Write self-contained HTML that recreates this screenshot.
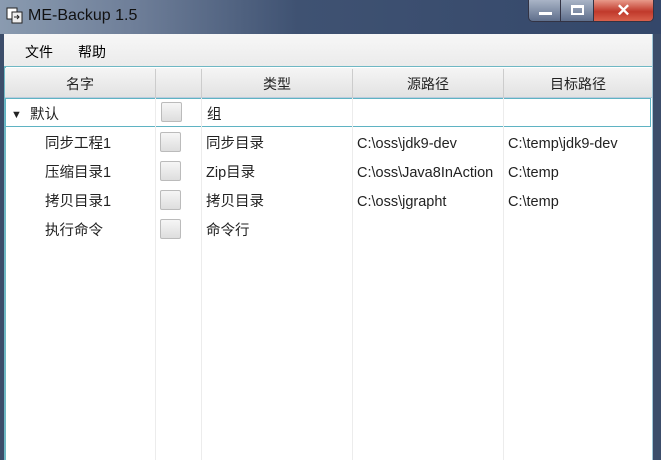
<!DOCTYPE html>
<html><head><meta charset="utf-8"><style>
*{margin:0;padding:0;box-sizing:border-box}
body{width:661px;height:460px;overflow:hidden;background:#3c4d6a;font-family:"Liberation Sans","Noto Sans CJK SC",sans-serif;position:relative}
.title{position:absolute;left:0;top:0;width:661px;height:34px;background:linear-gradient(90deg,#8a9bb0 0%,#6f7f99 20%,#3f5272 45%,#34476a 100%)}
.title .t{position:absolute;left:28px;top:7px;font-size:16px;color:#111}
.btns{position:absolute;left:528px;top:0;width:126px;height:22px;border:1px solid #334;border-top:none;border-radius:0 0 5px 5px;overflow:hidden;display:flex}
.btns div{height:100%;border-right:1px solid #334}
.win{position:absolute;left:4px;top:34px;width:648px;height:426px;background:#fff}
.menu{position:absolute;left:0;top:0;width:648px;height:33px;background:linear-gradient(#f7f7f7,#ebebeb);border-bottom:1px solid #6fb8c4;font-size:14px}
.menu span{position:absolute;top:1px;line-height:34px}
.hdr{position:absolute;left:1px;top:34px;width:647px;height:30px;background:linear-gradient(#f5f5f5,#e2e2e2);border-bottom:1px solid #bcd;font-size:14px;color:#222}
.hdr div{position:absolute;top:1px;height:30px;line-height:30px;text-align:center;border-right:1px solid #ccc}
.col{position:absolute;top:64px;bottom:0;width:1px;background:#ececec;z-index:2}
.row{position:absolute;left:0;width:648px;height:29px;font-size:14.5px;color:#222}
.row span{position:absolute;top:2px;height:29px;line-height:29px;white-space:nowrap}
.cb{position:absolute;left:156px;top:4px;width:21px;height:20px;border:1px solid #bbb;border-radius:2px;background:linear-gradient(#f6f6f6,#dedede)}
.sel{border:1px solid #5fb3c3}
</style></head><body>
<div class="title">
<svg style="position:absolute;left:6px;top:7px" width="18" height="18" viewBox="0 0 18 18"><rect x="1" y="1" width="10" height="11" fill="#fff" stroke="#222"/><rect x="6" y="5" width="10" height="11" fill="#eee" stroke="#222"/><path d="M8 10h5M11 8l2 2-2 2" stroke="#222" fill="none"/></svg>
<div class="t">ME-Backup 1.5</div>
<div class="btns">
<div style="width:33px;background:linear-gradient(#a9b4c6,#5f6f8c)"><div style="margin:12px 0 0 10px;width:13px;height:3px;background:#fff;border:none"></div></div>
<div style="width:33px;background:linear-gradient(#a9b4c6,#5f6f8c)"><div style="margin:5px 0 0 10px;width:13px;height:10px;border:2px solid #fff;border-top-width:3px"></div></div>
<div style="width:60px;border:none;background:linear-gradient(#e89a8a,#c0392b 55%,#d9604c);color:#fff;font-size:17px;font-weight:bold;text-align:center;line-height:22px">✕</div>
</div>
</div>
<div class="win">
<div class="menu"><span style="left:21px">文件</span><span style="left:74px">帮助</span></div>
<div style="position:absolute;left:0;top:33px;width:2px;bottom:0;background:#6fb8c4"></div>
<div class="hdr">
<div style="left:0;width:151px">名字</div>
<div style="left:151px;width:46px"></div>
<div style="left:197px;width:151px">类型</div>
<div style="left:348px;width:151px">源路径</div>
<div style="left:499px;width:148px;border:none">目标路径</div>
</div>
<div class="col" style="left:151px"></div>
<div class="col" style="left:197px"></div>
<div class="col" style="left:348px"></div>
<div class="col" style="left:499px"></div>
<div class="row sel" style="top:64px;left:1px;width:646px;background:#fff"><span style="left:5px;font-size:11px">▼</span><span style="left:24px">默认</span><div class="cb" style="left:155px;top:3px"></div><span style="left:201px">组</span></div>
<div class="row" style="top:94px"><span style="left:41px">同步工程1</span><div class="cb"></div><span style="left:202px">同步目录</span><span style="left:353px">C:\oss\jdk9-dev</span><span style="left:504px">C:\temp\jdk9-dev</span></div>
<div class="row" style="top:123px"><span style="left:41px">压缩目录1</span><div class="cb"></div><span style="left:202px">Zip目录</span><span style="left:353px">C:\oss\Java8InAction</span><span style="left:504px">C:\temp</span></div>
<div class="row" style="top:152px"><span style="left:41px">拷贝目录1</span><div class="cb"></div><span style="left:202px">拷贝目录</span><span style="left:353px">C:\oss\jgrapht</span><span style="left:504px">C:\temp</span></div>
<div class="row" style="top:181px"><span style="left:41px">执行命令</span><div class="cb"></div><span style="left:202px">命令行</span></div>
</div>
<div style="position:absolute;left:652px;top:34px;width:1px;height:426px;background:#9fc6d8"></div>
</body></html>
